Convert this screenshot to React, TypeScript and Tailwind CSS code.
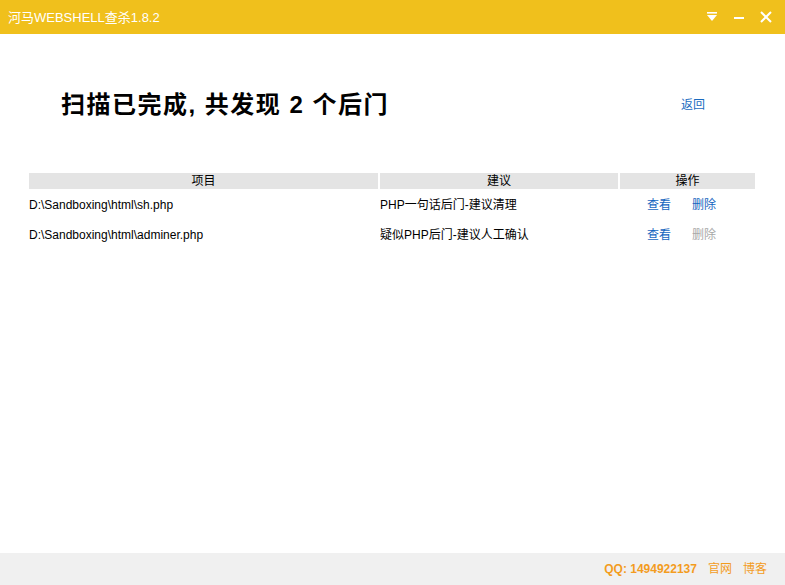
import React from 'react';

const rows = [
    { path: 'D:\\Sandboxing\\html\\sh.php', advice: 'PHP一句话后门-建议清理', canDelete: true },
    { path: 'D:\\Sandboxing\\html\\adminer.php', advice: '疑似PHP后门-建议人工确认', canDelete: false },
];

const font = { fontFamily: '"Liberation Sans", Arial, "Noto Sans CJK SC", sans-serif' };

function TitleBar() {
    return (
        <div className="flex h-[34px] items-center justify-between bg-[#f0c01c] pl-[8px] pr-[6px] text-white">
            <span className="text-[13px] leading-none">河马WEBSHELL查杀1.8.2</span>
            <div className="flex items-center">
                {/* menu */}
                <div className="flex h-[34px] w-[27px] items-center justify-center">
                    <svg width="12" height="12" viewBox="0 0 12 12">
                        <rect x="1" y="1" width="10" height="1.6" fill="#fff" />
                        <path d="M1 4 H11 L6 10 Z" fill="#fff" />
                    </svg>
                </div>
                {/* minimize */}
                <div className="flex h-[34px] w-[27px] items-center justify-center">
                    <svg width="12" height="12" viewBox="0 0 12 12">
                        <rect x="1" y="6" width="10" height="2" fill="#fff" />
                    </svg>
                </div>
                {/* close */}
                <div className="flex h-[34px] w-[27px] items-center justify-center">
                    <svg width="12" height="12" viewBox="0 0 12 12">
                        <path d="M1 1 L11 11 M11 1 L1 11" stroke="#fff" strokeWidth="2" />
                    </svg>
                </div>
            </div>
        </div>
    );
}

export default function App() {
    return (
        <div className="flex h-[585px] w-[785px] flex-col bg-white text-black" style={font}>
            <TitleBar />

            <div className="flex-1">
                {/* Heading */}
                <div className="flex items-center justify-between pl-[61px] pr-[80px] pt-[55px]">
                    <h1 className="text-[24px] font-bold leading-[32px] tracking-[1.5px]">
                        扫描已完成, 共发现 2 个后门
                    </h1>
                    <a className="text-[12px] leading-none text-[#1a6bbf]">返回</a>
                </div>

                {/* Table */}
                <div className="mt-[52px] px-[29px] text-[12px]">
                    <div className="flex h-[16px] gap-[2px] leading-[16px]">
                        <div className="w-[349px] bg-[#e4e4e4] text-center">项目</div>
                        <div className="w-[238px] bg-[#e4e4e4] text-center">建议</div>
                        <div className="w-[135px] bg-[#e4e4e4] text-center">操作</div>
                    </div>
                    {rows.map((r, i) => (
                        <div key={i} className="flex h-[30px] items-center gap-[2px] pt-[1px]">
                            <div className="w-[349px]">{r.path}</div>
                            <div className="w-[238px]">{r.advice}</div>
                            <div className="flex w-[135px] gap-[21px] pl-[27px]">
                                <span className="text-[#1565c0]">查看</span>
                                <span className={r.canDelete ? 'text-[#1565c0]' : 'text-[#a8a8a8]'}>删除</span>
                            </div>
                        </div>
                    ))}
                </div>
            </div>

            {/* Footer */}
            <div className="flex h-[32px] items-center justify-end gap-[11px] bg-[#f0f0f0] pr-[18px] text-[12px] text-[#f39c1e]">
                <span className="font-bold">QQ: 1494922137</span>
                <span>官网</span>
                <span>博客</span>
            </div>
        </div>
    );
}
